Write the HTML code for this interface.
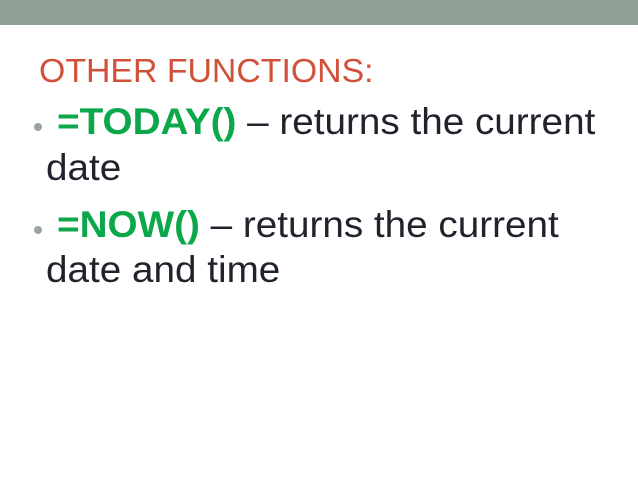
<!DOCTYPE html>
<html><head><style>
body{margin:0;width:638px;height:478px;background:#fff;position:relative;overflow:hidden;font-family:"Liberation Sans",Arial,sans-serif}
.bar{position:absolute;left:0;top:0;width:638px;height:25px;background:#8fa095}
.t{position:absolute;white-space:nowrap;line-height:1;transform-origin:left center}
.g{color:#0aa84a;font-weight:bold}
.d{color:#22222c;transform:scaleX(1.045)}
.b{position:absolute;width:8px;height:8px;border-radius:50%;background:#9aa59d}
</style></head><body>
<div class="bar"></div>
<div class="t" style="left:39px;top:55px;font-size:33.5px;color:#d0503a;transform:scaleX(1.01)">OTHER FUNCTIONS:</div>
<div class="b" style="left:34px;top:123px"></div>
<div class="t d" style="left:57px;top:103px;font-size:37px"><span class="g">=TODAY()</span> – returns the current</div>
<div class="t d" style="left:46px;top:149px;font-size:37px">date</div>
<div class="b" style="left:34px;top:226px"></div>
<div class="t d" style="left:57px;top:206px;font-size:37px"><span class="g">=NOW()</span> – returns the current</div>
<div class="t d" style="left:46px;top:251px;font-size:37px">date and time</div>
</body></html>
